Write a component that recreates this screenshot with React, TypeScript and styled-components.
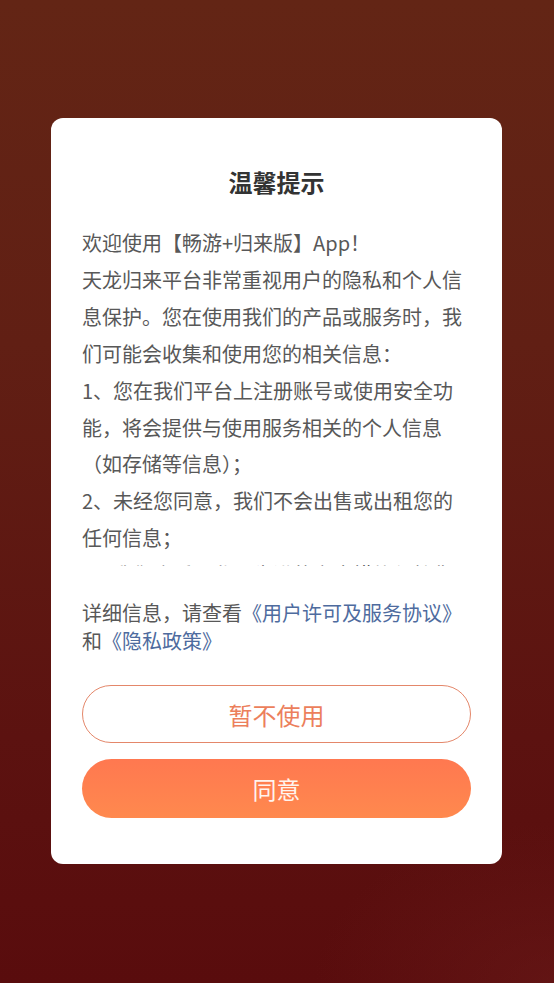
import styled, { createGlobalStyle } from "styled-components"

const GlobalStyle = createGlobalStyle`
  html, body {
    margin: 0;
    padding: 0;
  }
  body {
    font-family: "Noto Sans CJK SC", "Noto Sans", sans-serif;
    background: #5e1510;
  }
`

const Page = styled.div`
  min-height: 983px;
  box-sizing: border-box;
  padding: 118px 52px 0 51px;
  background:
    radial-gradient(ellipse 240px 160px at 100% 100%, rgba(110, 30, 28, 0.45), rgba(110, 30, 28, 0) 100%),
    linear-gradient(180deg, #632515 0%, #611f14 35%, #5c1210 75%, #590c0d 100%);
`

const Dialog = styled.div`
  background: #ffffff;
  border-radius: 12px;
  padding: 48px 31px 46px;
  display: flex;
  flex-direction: column;
`

const Title = styled.h2`
  margin: 0;
  text-align: center;
  font-size: 24px;
  line-height: 32px;
  font-weight: 700;
  color: #333333;
`

const Scroller = styled.div`
  margin-top: 27px;
  height: 341px;
  overflow: hidden;
  margin-bottom: 3px;
`

const Paragraph = styled.p`
  margin: 0;
  font-size: 20px;
  line-height: 36.9px;
  color: #585858;
`

const Notice = styled.p`
  margin: 30px 0 0;
  font-size: 20px;
  line-height: 28px;
  color: #585858;
`

const Link = styled.span`
  color: #4e6b9e;
`

const Actions = styled.div`
  margin-top: 30px;
  display: flex;
  flex-direction: column;
  gap: 16px;
`

const Button = styled.button<{ $primary?: boolean }>`
  height: ${p => (p.$primary ? "59px" : "58px")};
  border-radius: 30px;
  font-family: inherit;
  font-size: 24px;
  cursor: pointer;
  border: ${p => (p.$primary ? "none" : "1px solid #e4876a")};
  color: ${p => (p.$primary ? "#fff4ee" : "#ec7f5c")};
  background: ${p => (p.$primary ? "linear-gradient(180deg, #ff7850, #ff894e)" : "#ffffff")};
`

const body = [
  "欢迎使用【畅游+归来版】App！",
  "天龙归来平台非常重视用户的隐私和个人信息保护。您在使用我们的产品或服务时，我们可能会收集和使用您的相关信息：",
  "1、您在我们平台上注册账号或使用安全功能，将会提供与使用服务相关的个人信息（如存储等信息）；",
  "2、未经您同意，我们不会出售或出租您的任何信息；",
  "3、我们会采取业界先进的安全措施保护您的信息安全；",
]

export default function App() {
  return <>
    <GlobalStyle />
    <Page>
      <Dialog>
        <Title>温馨提示</Title>
        <Scroller>
          {body.map(line => (
            <Paragraph key={line}>{line}</Paragraph>
          ))}
        </Scroller>
        <Notice>
          详细信息，请查看<Link>《用户许可及服务协议》</Link>和<Link>《隐私政策》</Link>
        </Notice>
        <Actions>
          <Button>暂不使用</Button>
          <Button $primary>同意</Button>
        </Actions>
      </Dialog>
    </Page>
  </>
}
